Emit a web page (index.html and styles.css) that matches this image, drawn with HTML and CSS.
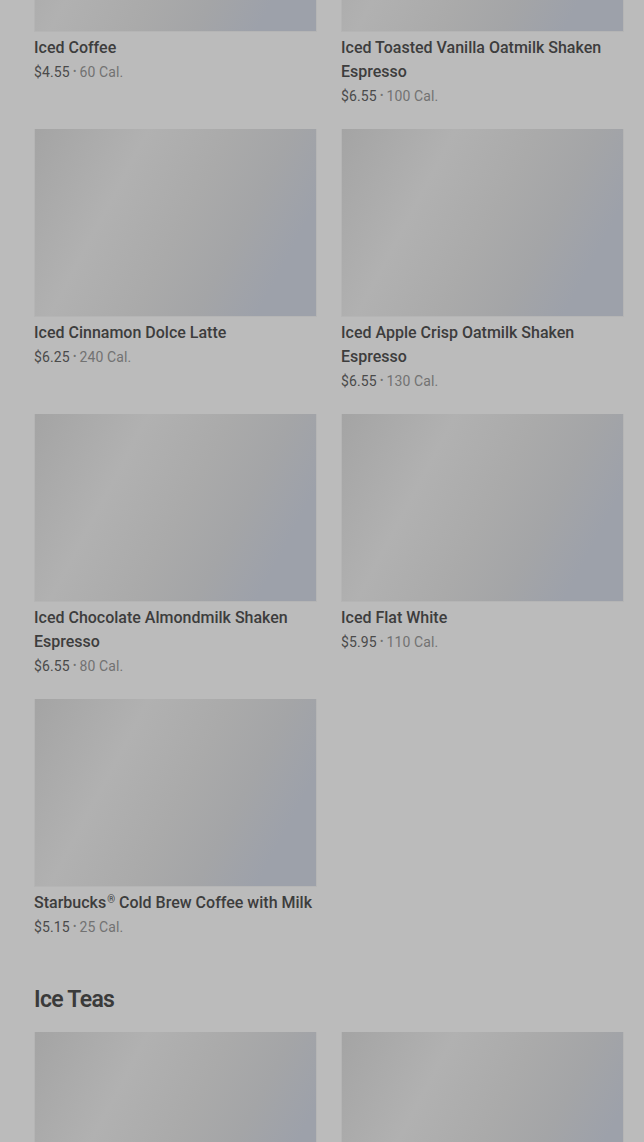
FILE: index.html
```html
<!DOCTYPE html>
<html lang="en">
<head>
<meta charset="utf-8">
<title>Menu</title>
<link rel="stylesheet" href="styles.css">
</head>
<body>
<main class="page">
  <section class="section">
    <div class="grid">
      <div class="card"><div class="thumb"></div><div class="name">Iced Coffee</div><div class="meta"><span class="price">$4.55</span><span class="dot">•</span><span class="cal">60 Cal.</span></div></div>
      <div class="card"><div class="thumb"></div><div class="name">Iced Toasted Vanilla Oatmilk Shaken Espresso</div><div class="meta"><span class="price">$6.55</span><span class="dot">•</span><span class="cal">100 Cal.</span></div></div>
      <div class="card"><div class="thumb"></div><div class="name">Iced Cinnamon Dolce Latte</div><div class="meta"><span class="price">$6.25</span><span class="dot">•</span><span class="cal">240 Cal.</span></div></div>
      <div class="card"><div class="thumb"></div><div class="name">Iced Apple Crisp Oatmilk Shaken Espresso</div><div class="meta"><span class="price">$6.55</span><span class="dot">•</span><span class="cal">130 Cal.</span></div></div>
      <div class="card"><div class="thumb"></div><div class="name">Iced Chocolate Almondmilk Shaken Espresso</div><div class="meta"><span class="price">$6.55</span><span class="dot">•</span><span class="cal">80 Cal.</span></div></div>
      <div class="card"><div class="thumb"></div><div class="name">Iced Flat White</div><div class="meta"><span class="price">$5.95</span><span class="dot">•</span><span class="cal">110 Cal.</span></div></div>
      <div class="card"><div class="thumb"></div><div class="name">Starbucks<span class="reg">®</span> Cold Brew Coffee with Milk</div><div class="meta"><span class="price">$5.15</span><span class="dot">•</span><span class="cal">25 Cal.</span></div></div>
    </div>
  </section>
  <section class="section">
    <h2 class="heading">Ice Teas</h2>
    <div class="grid">
      <div class="card"><div class="thumb"></div></div>
      <div class="card"><div class="thumb"></div></div>
    </div>
  </section>
</main>
</body>
</html>
```
FILE: styles.css
```css
html, body {
  margin: 0;
  padding: 0;
  background: #bbbbbb;
}
body {
  font-family: Roboto, "Liberation Sans", sans-serif;
  color: #3a3a3a;
  overflow: hidden;
}
.page {
  margin-top: -156px;
  padding: 0 20px 0 34px;
}
.section + .section {
  margin-top: 47px;
}
.grid {
  display: grid;
  grid-template-columns: 283px 283px;
  column-gap: 24px;
  row-gap: 23px;
  align-items: start;
}
.thumb {
  height: 188px;
  background: linear-gradient(118deg, #a4a4a4 0%, #b1b1b1 30%, #aaaaaa 52%, #a4a5a7 68%, #9da1aa 84%, #9da1aa 100%);
  box-shadow: inset 1px 0 0 #b5b5b5, inset -1px 0 0 #b5b5b5, inset 0 -1px 0 #b5b5b5;
}
.name {
  margin-top: 4px;
  font-size: 16px;
  line-height: 24px;
  font-weight: 500;
  color: #3d3d3d;
}
.reg {
  font-size: 10px;
  line-height: 0;
  vertical-align: 5px;
  margin-left: 1px;
}
.meta {
  margin-top: 2px;
  height: 20px;
  font-size: 14px;
  line-height: 20px;
  letter-spacing: 0.01em;
  display: flex;
  align-items: center;
}
.price { color: #4a4a4a; }
.dot {
  color: #727272;
  font-size: 10px;
  line-height: 20px;
  margin: 0 3px;
}
.cal { color: #727272; }
.heading {
  margin: 0 0 16px;
  font-size: 23px;
  line-height: 32px;
  font-weight: 600;
  letter-spacing: -0.03em;
  color: #3a3a3a;
}
```
